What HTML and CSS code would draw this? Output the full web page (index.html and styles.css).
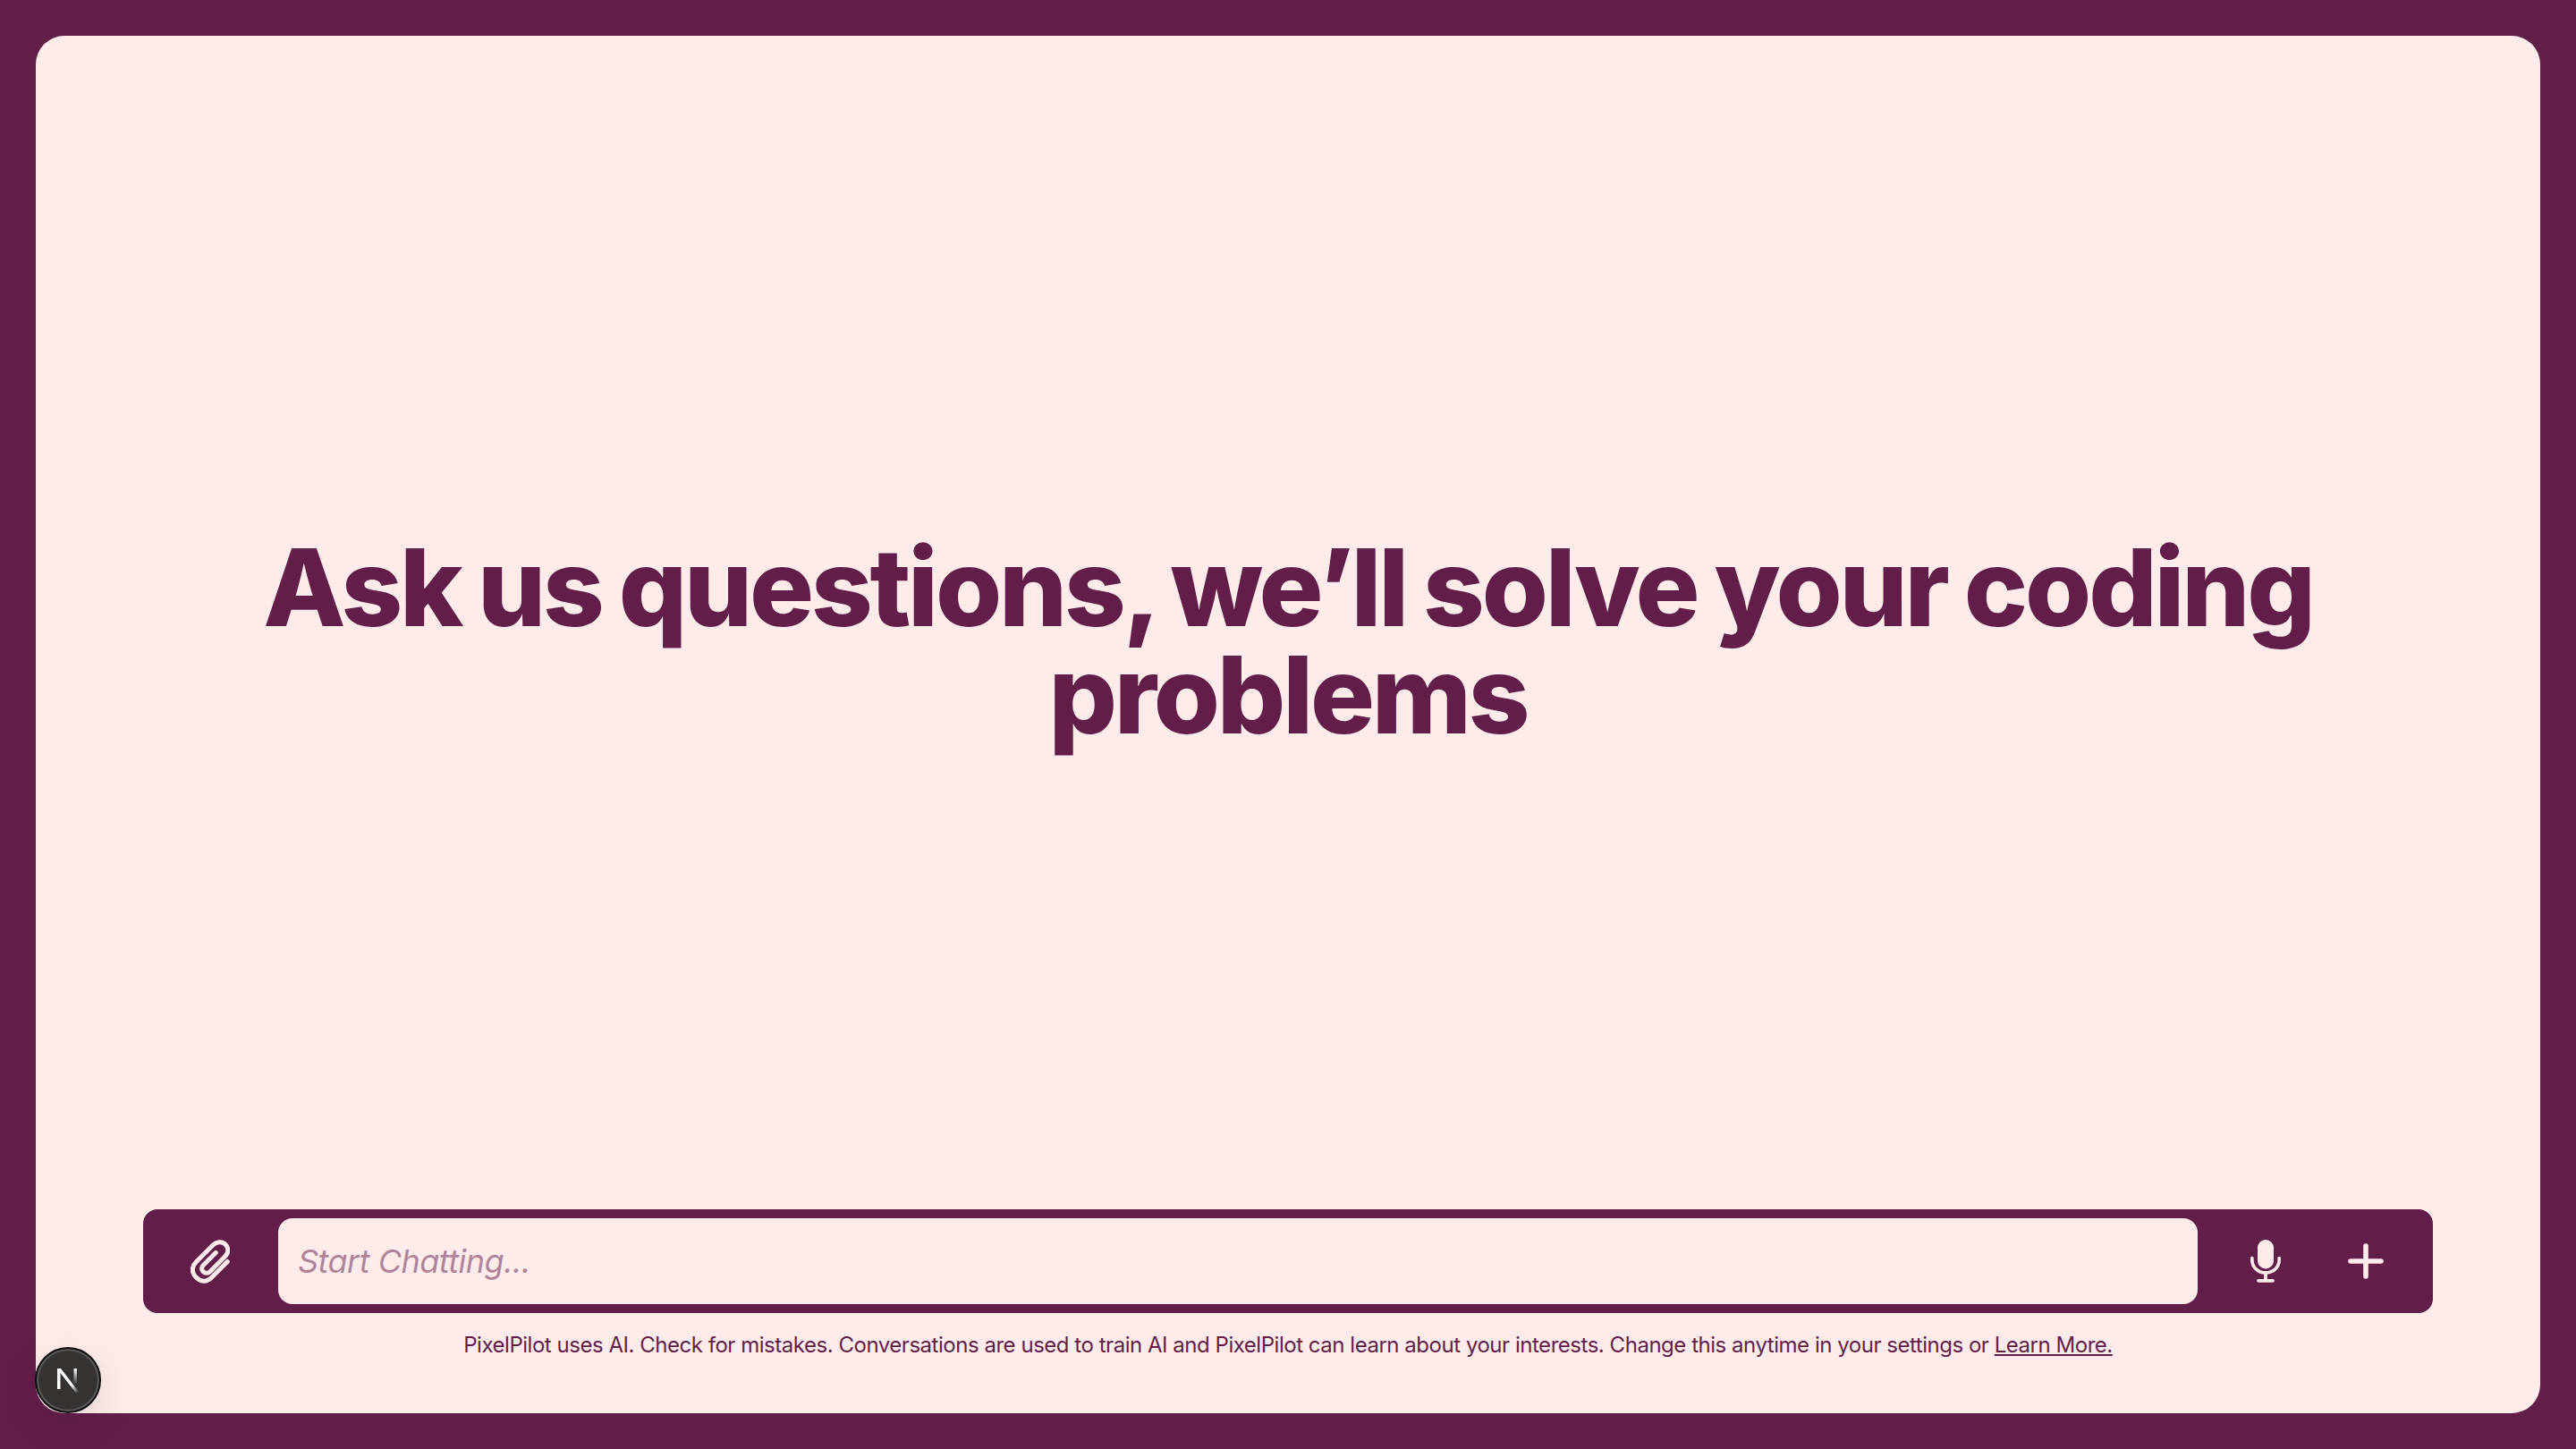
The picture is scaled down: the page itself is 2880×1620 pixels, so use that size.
FILE: index.html
```html
<!DOCTYPE html>
<html lang="en">
<head>
  <meta charset="UTF-8">
  <title>PixelPilot</title>
  <link rel="stylesheet" href="styles.css">
</head>
<body>
  <div class="panel">
    <main class="hero">
      <h1>Ask us questions, we’ll solve your coding problems</h1>
    </main>
    <form class="chat-bar">
      <button type="button" class="icon-btn" aria-label="Attach">
        <svg width="44" height="50" viewBox="0 0 42 48" fill="none" stroke="currentColor" stroke-width="4.800" stroke-linecap="round" stroke-linejoin="round">
          <path d="M39.500 24.500 L22 42 C17 47 10.500 46 5.500 41 C1 36.500 .800 30 5.800 25 L24 6.800 C28 2.800 33.500 2.300 37.300 6 C41 9.500 41 15 37 19 L21 35 C18.500 37.500 15.500 37.300 13.500 35.300 C11.500 33.300 11.300 30.500 13.800 28 L27 14.800"/>
        </svg>
      </button>
      <input class="chat-input" type="text" placeholder="Start Chatting...">
      <div class="bar-actions">
        <button type="button" class="icon-btn" aria-label="Voice">
          <svg width="34" height="48" viewBox="0 0 34 48" fill="none">
            <rect x="8" y="0" width="18" height="32.500" rx="9" fill="currentColor"/>
            <path d="M1.800 20.500 V22 C1.800 31 8.500 37 17 37 C25.500 37 32.200 31 32.200 22 V20.500" stroke="currentColor" stroke-width="3.600" stroke-linecap="round"/>
            <path d="M17 37 V45.800 M9 45.800 H25" stroke="currentColor" stroke-width="3.800" stroke-linecap="round"/>
          </svg>
        </button>
        <button type="button" class="icon-btn" aria-label="New chat">
          <svg width="40" height="40" viewBox="0 0 40 40" fill="none" stroke="currentColor" stroke-width="5.600" stroke-linecap="round">
            <path d="M20 3 V37 M3 20 H37"/>
          </svg>
        </button>
      </div>
    </form>
    <p class="disclaimer">PixelPilot uses AI. Check for mistakes. Conversations are used to train AI and PixelPilot can learn about your interests. Change this anytime in your settings or <a href="#">Learn More.</a></p>
  </div>

  <div class="dev-badge">
    <svg width="30" height="30" viewBox="0 0 30 30" fill="none">
      <defs>
        <linearGradient id="nFade" x1="0" y1="0" x2="1" y2="1">
          <stop offset="0.650" stop-color="#fff"/>
          <stop offset="1" stop-color="#fff" stop-opacity="0"/>
        </linearGradient>
        <linearGradient id="nBar" x1="0" y1="0" x2="0" y2="1">
          <stop offset="0" stop-color="#fff"/>
          <stop offset="1" stop-color="#fff" stop-opacity="0"/>
        </linearGradient>
      </defs>
      <path d="M3 2 H7 L27 28 L24 29.500 L6.500 7 V25 H3 Z" fill="url(#nFade)"/>
      <rect x="21.500" y="2" width="3.500" height="18" fill="url(#nBar)"/>
    </svg>
  </div>
</body>
</html>
```

FILE: styles.css
```css
* { box-sizing: border-box; }

html, body { height: 100%; margin: 0; }

body {
  padding: 40px;
  background: #621e49;
  color: #621e49;
  font-family: "Inter", "Liberation Sans", sans-serif;
}

.panel {
  height: 100%;
  display: flex;
  flex-direction: column;
  align-items: center;
  background: #ffecea;
  border-radius: 32px;
  padding-bottom: 61px;
}

/* heading sits a bit below true centre */
.hero {
  flex: 1;
  width: 100%;
  display: flex;
  align-items: center;
  justify-content: center;
  padding-top: 42px;
}

.hero h1 {
  margin: 0;
  max-width: 2400px;
  font-size: 120px;
  line-height: 120px;
  font-weight: 800;
  letter-spacing: -3.2px;
  word-spacing: -4px;
  text-align: center;
}

.chat-bar {
  width: 2560px;
  height: 116px;
  display: flex;
  align-items: center;
  gap: 20px;
  padding: 10px 19px;
  background: #621e49;
  border-radius: 16px;
}

.bar-actions { display: flex; flex: none; }

.icon-btn {
  flex: none;
  width: 112px;
  height: 96px;
  display: flex;
  align-items: center;
  justify-content: center;
  padding: 0;
  border: none;
  background: none;
  color: #ffecea;
  cursor: pointer;
}

.chat-input {
  flex: 1;
  min-width: 0;
  height: 96px;
  padding: 0 22px;
  border: none;
  border-radius: 16px;
  outline: none;
  background: #ffecea;
  color: #621e49;
  font-family: inherit;
  font-size: 36px;
  font-style: italic;
  letter-spacing: -0.5px;
}

.chat-input::placeholder { color: #621e49; opacity: 0.5; }

.disclaimer {
  margin: 21px 0 0;
  font-size: 24px;
  line-height: 30px;
  letter-spacing: -0.47px;
  text-align: center;
}

.disclaimer a { color: inherit; text-decoration: underline; }

.dev-badge {
  position: fixed;
  left: 39px;
  bottom: 40px;
  width: 74px;
  height: 74px;
  display: flex;
  align-items: center;
  justify-content: center;
  background: #353230;
  border: 2px solid #111;
  border-radius: 50%;
  box-shadow: inset 0 0 0 2px #5c5a58, 0 12px 40px rgba(0,0,0,0.1);
}
```
